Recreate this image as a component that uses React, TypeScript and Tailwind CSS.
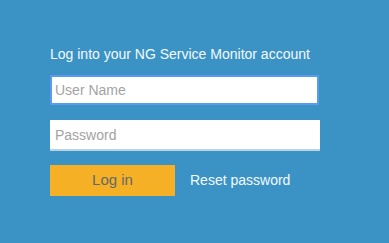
import React from "react";

export default function App() {
  return (
    <div className="w-[389px] h-[243px] bg-[#3b93c5] overflow-hidden" style={{ fontFamily: '"Liberation Sans", Arial, sans-serif' }}>
      <div className="pt-[46px] pl-[50px] flex flex-col">
        <div className="text-[14px] leading-[16px] text-[#f4f9fc]">Log into your NG Service Monitor account</div>
        <input
          autoFocus
          placeholder="User Name"
          className="mt-[13px] w-[269px] h-[30px] bg-white border-2 border-[#5a9af0] px-[3px] text-[14px] text-[#333] placeholder:text-[#a3a3a3] outline-none"
        />
        <input
          type="password"
          placeholder="Password"
          className="mt-[15px] w-[270px] h-[31px] bg-white border-b-2 border-[#b7d3e6] px-[5px] text-[14px] text-[#333] placeholder:text-[#a3a3a3] outline-none"
        />
        <div className="mt-[14px] flex items-center">
          <button className="w-[125px] h-[31px] bg-[#f5b026] text-[#5f6b6a] text-[15px]">Log in</button>
          <span className="ml-[15px] text-[#f4f9fc] text-[14px]">Reset password</span>
        </div>
      </div>
    </div>
  );
}
